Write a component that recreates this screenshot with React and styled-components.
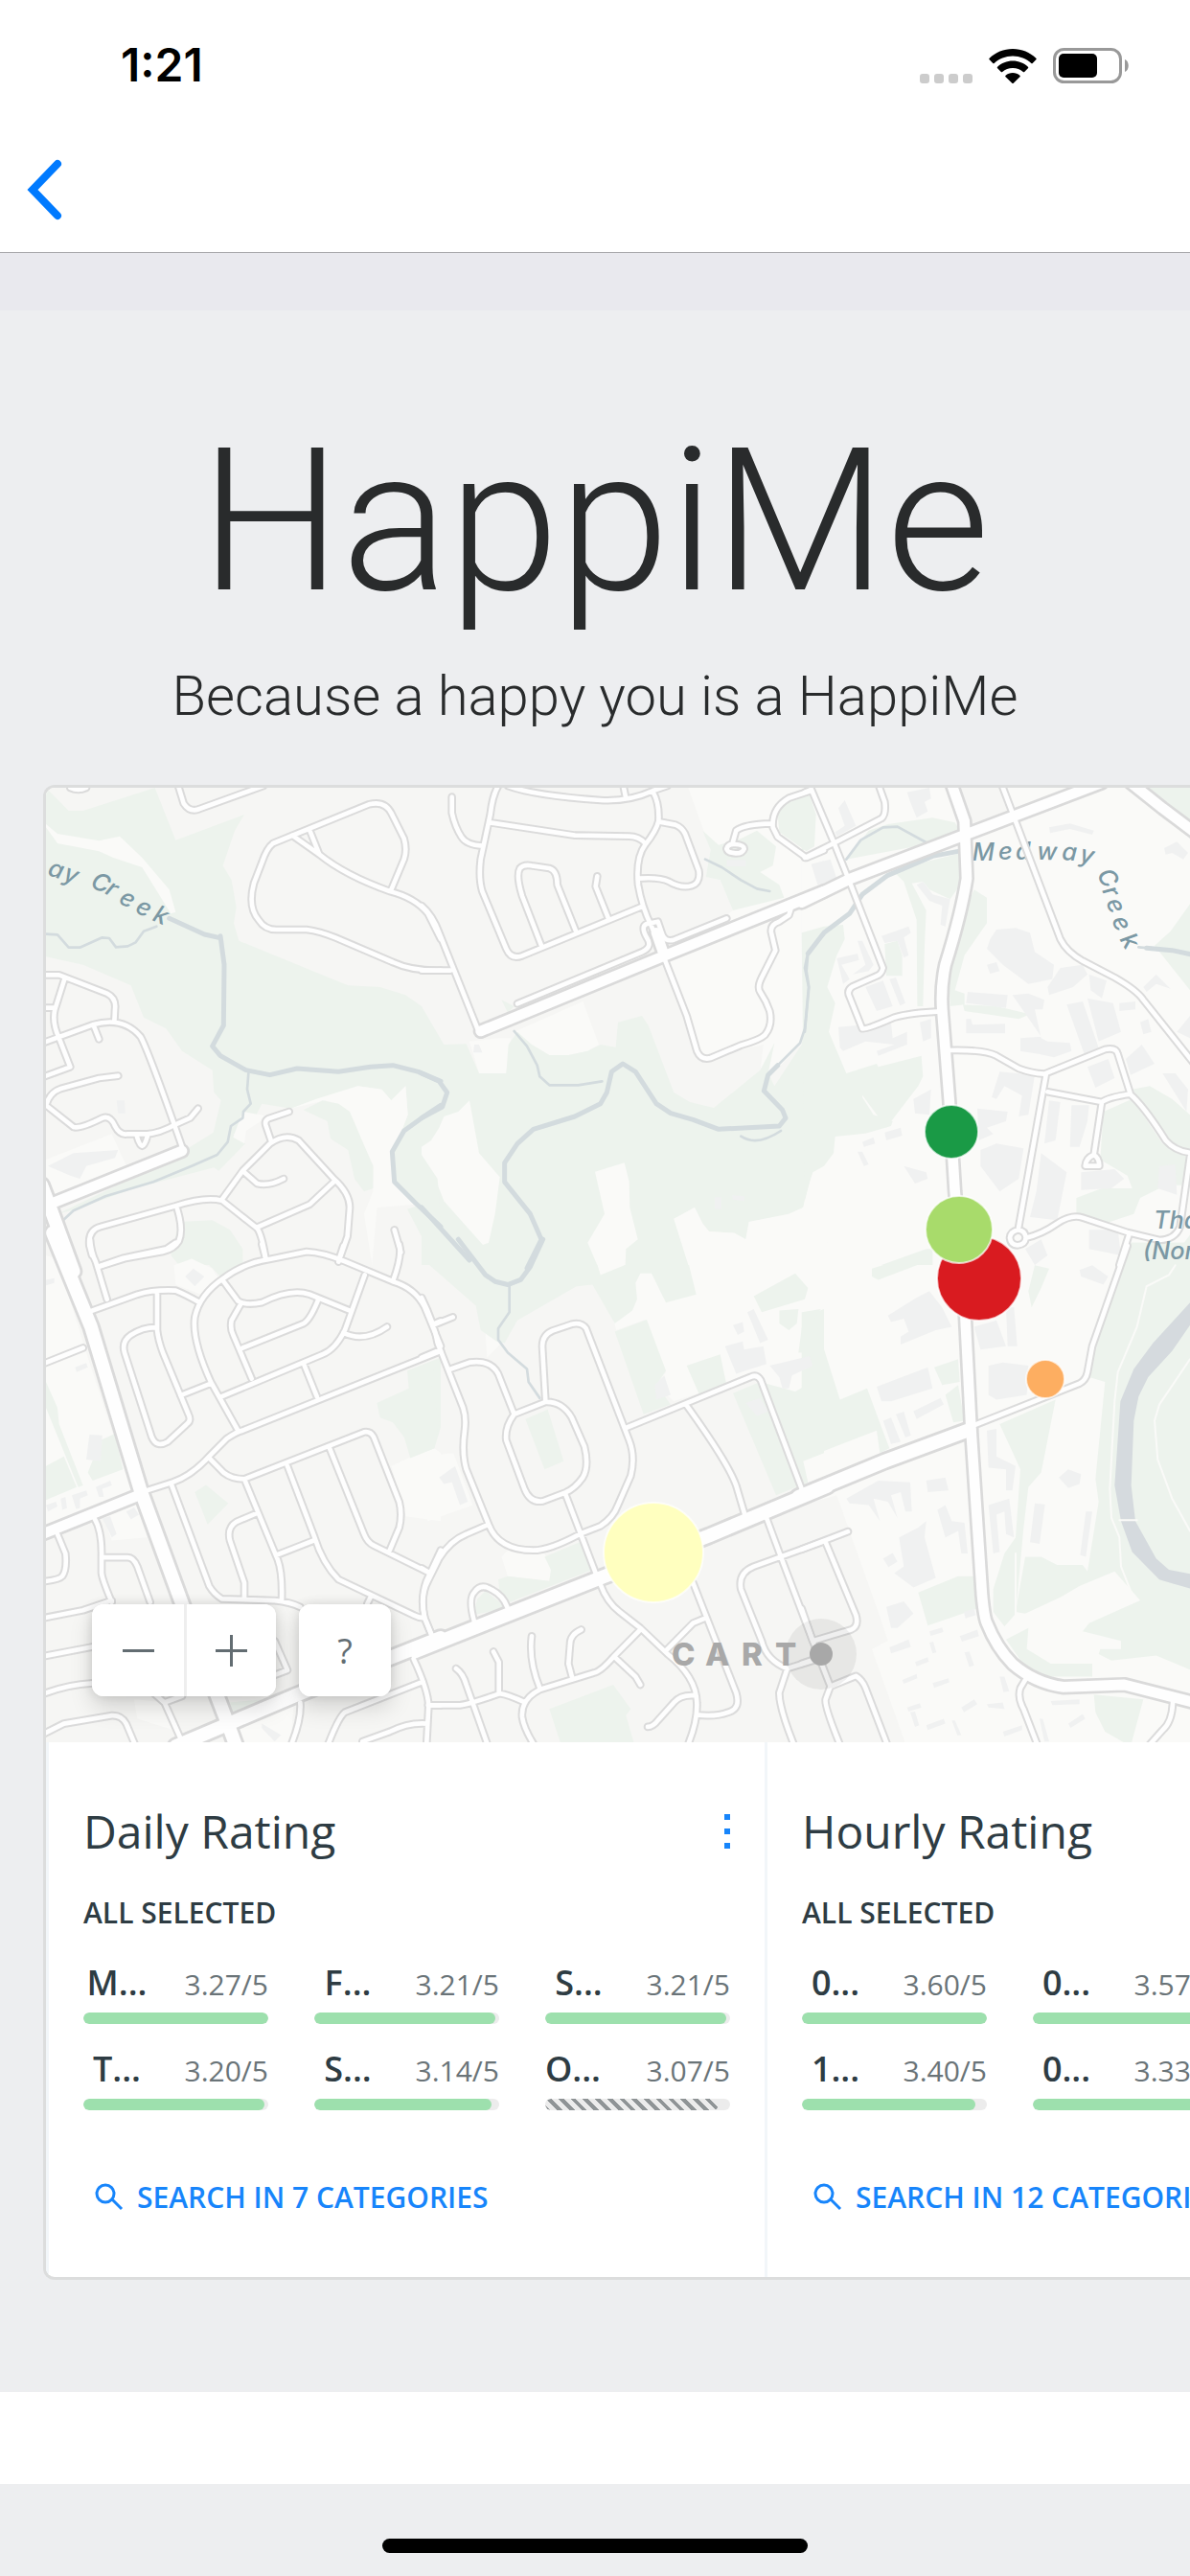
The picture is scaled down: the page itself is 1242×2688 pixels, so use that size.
import React from 'react'
import styled, { createGlobalStyle, css } from 'styled-components'

const GlobalStyle = createGlobalStyle`
    html, body
    {
        margin: 0;
        padding: 0;
        background: #edeef0;
    }

    body
    {
        overflow-x: hidden;
        font-family: 'Open Sans', sans-serif;
    }
`

const Screen = styled.div`
    display: flex;
    flex-direction: column;

    width: 100%;
    min-height: 100vh;
    overflow: hidden;
`

const StatusBar = styled.header`
    background: white;

    display: flex;
    align-items: center;
    justify-content: space-between;

    box-sizing: border-box;
    height: 132px;
    padding: 4px 63px 0 126px;
`

const Clock = styled.time`
    font-family: Inter, sans-serif;
    font-size: 48px;
    font-weight: 600;
    line-height: 56px;
    color: black;
`

const StatusIcons = styled.div`
    display: flex;
    align-items: flex-end;
    gap: 17px;

    svg
    {
        display: block;
    }
`

const NavBar = styled.nav`
    background: white;
    border-bottom: 1px solid #a7a7aa;

    display: flex;
    align-items: center;

    height: 131px;
    padding: 0 28px;
`

const BackButton = styled.button`
    background: none;
    border: 0;
    padding: 0;

    svg
    {
        display: block;
    }
`

const Strip = styled.div`
    flex: none;
    height: 60px;
    background: #e9e9ee;
`

const Hero = styled.section`
    padding: 92px 0 57px;

    text-align: center;
    font-family: Roboto, sans-serif;
    font-weight: 300;
    color: #292b2c;
`

const Title = styled.h1`
    margin: 0;
    font-size: 208px;
    font-weight: 300;
    line-height: 256px;
`

const Subtitle = styled.p`
    margin: 18px 0 0;
    font-size: 58px;
    line-height: 72px;
`

const Card = styled.main`
    margin-left: 45px;

    background: white;
    border: 3px solid #dcdddd;
    border-right: 0;
    border-radius: 12px 0 0 12px;
    overflow: hidden;
`

const MapArea = styled.section`
    position: relative;
    height: 996px;
    background: #f6f6f4;

    > svg
    {
        display: block;
        width: 100%;
        height: 100%;
    }
`

const Controls = styled.div`
    position: absolute;
    left: 48px;
    bottom: 48px;

    display: flex;
    gap: 24px;
`

const ControlGroup = styled.div`
    display: flex;
    border-radius: 12px;
    box-shadow: 0 12px 24px rgba(0, 0, 0, 0.14), 0 0 12px rgba(0, 0, 0, 0.12);
    background: white;
    overflow: hidden;
`

const ControlButton = styled.button`
    display: flex;
    align-items: center;
    justify-content: center;

    box-sizing: border-box;
    width: ${p => p.$width || 96}px;
    height: 96px;
    padding: 0;

    background: white;
    border: 0;
    border-right: ${p => p.$divided ? '3px solid #eee' : '0'};

    font-family: 'Open Sans', sans-serif;
    font-size: 36px;
    color: #636d72;
`

const Widgets = styled.div`
    display: flex;
`

const Widget = styled.section`
    flex: 0 0 750px;
    box-sizing: border-box;
    padding: 60px 36px 62px;
    border-left: 3px solid #f2f6f9;
    color: #2e3c43;
`

const WidgetHead = styled.div`
    display: flex;
    align-items: center;
    justify-content: space-between;
`

const WidgetTitle = styled.h2`
    margin: 0;
    font-size: 48px;
    font-weight: 400;
    line-height: 66px;
`

const MenuButton = styled.button`
    background: none;
    border: 0;
    padding: 0;

    svg
    {
        display: block;
    }
`

const Selected = styled.p`
    margin: 31px 0 0;
    font-size: 30px;
    font-weight: 600;
    line-height: 42px;
`

const Items = styled.ul`
    display: grid;
    grid-template-columns: repeat(3, 1fr);
    grid-template-rows: repeat(2, 60px);
    grid-auto-flow: column;
    gap: 30px 48px;

    margin: 35px 0 0;
    padding: 0;
    list-style: none;
`

const ItemRow = styled.div`
    display: flex;
    align-items: baseline;
    justify-content: space-between;
    height: 48px;
    line-height: 34px;
`

const ItemName = styled.span`
    min-width: 70px;
    font-size: 36px;
    font-weight: 600;
    text-align: ${p => p.$flush ? 'left' : 'center'};
`

const ItemValue = styled.span`
    font-size: 30px;
    color: #6a7478;
`

const Track = styled.div`
    height: 12px;
    border-radius: 6px;
    background: #ececec;
    overflow: hidden;
`

const Fill = styled.div`
    height: 100%;
    border-radius: 6px;
    background: #9de0ad;

    ${p => p.$hatched && css`
        background: repeating-linear-gradient(45deg, #8f9496 0, #8f9496 4px, #ececec 4px, #ececec 9px);
    `}
`

const SearchLink = styled.a`
    display: flex;
    align-items: center;
    gap: 14px;

    margin-top: 70px;
    padding-left: 12px;

    font-size: 30px;
    font-weight: 600;
    line-height: 42px;
    text-decoration: none;
    white-space: nowrap;
    color: #1785fb;
`

const WhiteBand = styled.div`
    flex: none;
    height: 96px;
    margin-top: 117px;
    background: white;
`

const HomeArea = styled.footer`
    display: flex;
    justify-content: center;
    padding: 57px 0 24px;
`

const HomeBar = styled.div`
    width: 444px;
    height: 15px;
    border-radius: 8px;
    background: black;
`

const upper = 'scale(0.33333)'
const lower = 'scale(0.33333 0.338)'

// The base map comes in six tiles, every one with its own drawing units
const tiles = [
    {
        at: `translate(-8 -22) ${upper}`,
        open: '',
        parks: 'M24 66 95 138 140 138 365 66 430 230 645 150 615 200 578 310 605 355 620 440 612 490 628 545 970 685 1070 690 1150 715 1200 750 1235 830 1260 865V1470L1200 1400 1105 1220 1157 1090 1150 1000 1105 1045 1075 1010 1000 1000 890 1045 790 1070 700 1055 680 1095 650 1140 610 1150 648 1180 565 1265 550 1255 300 1320 120 1385 60 1400 270 1300 460 1200 548 1145 572 1045 550 1020 545 950 450 890 400 820 330 785 290 685 140 620 24 595Z M440 1425 545 1420 600 1450 640 1510V1560H500L470 1540 440 1560 415 1530Z',
        clearings: 'M24 180 60 210 190 232 255 218 325 285 410 385 430 455 415 460 325 315 235 285 190 265 60 240 24 190Z M790 1070 870 1040 1000 1000 1075 1010 1105 1045 1150 1000 1157 1090 1130 1160 1105 1220 1115 1300 1180 1370 1060 1380 1045 1560 1020 1400 1048 1330 1050 1250 970 1080 900 1045Z M24 1230 230 1150 280 1260 24 1350Z M640 1080 720 1095 650 1140 645 1180 610 1160Z',
        groves: 'M830 1075 890 1045 940 1055 975 1080 1048 1250 1048 1320 1020 1330 990 1290 970 1200 915 1165 905 1110Z M1155 1385 1200 1370 1260 1430V1560H1225L1205 1480Z M1130 1165 1200 1215 1250 1290 1260 1420 1180 1360 1115 1290 1108 1205Z',
        buildings: 'M30 1250 110 1210 250 1200 240 1225 150 1250 130 1290 100 1280Z M245 1045 270 1045 272 1085 250 1085Z',
        wide: 'M410 475 520 525 565 535 M570 530 582 620 580 810 545 875 570 905 650 950 725 965 810 945 940 955 1040 940 1110 935 1190 955 1260 985 M1260 1060 1200 1100 1145 1140 1108 1205 1115 1300 1180 1365 1260 1440',
        narrow: 'M24 524 60 526 95 566 130 566 200 535 222 537 243 565 280 562 305 550 330 515 370 500 M658 960 654 1010 665 1055 642 1080 640 1100 603 1125 593 1175 560 1215 480 1250 360 1300 210 1345 110 1390 72 1425',
        major: 'M450 1203 L35 1370',
        highway: 'M10 1310 L35 1375 L110 1580',
        streets: 'M100 66Q125 78 150 66 M435 50L455 115Q475 145 505 132L705 60 M735 240L1035 118Q1085 105 1105 145L1145 225Q1155 260 1145 290L1105 385 M735 240Q715 255 700 300L675 365Q655 440 690 480Q710 512 750 510L840 510Q880 515 930 535L1110 612Q1170 640 1260 638 M795 215L880 275Q960 340 1100 390Q1180 410 1220 460L1260 540 M850 200L880 275 M0 652H65L215 710Q245 725 240 760L238 800 M82 665L52 760Q42 800 65 850L100 940L10 973 M0 755H50 M0 870L170 808Q265 780 320 845Q345 890 450 1190 M175 815L190 853 M250 968L190 975L70 1008Q35 1020 24 1060L110 1128Q130 1135 200 1100Q225 1090 240 1125Q255 1155 280 1150L340 1150Q380 1148 430 1120L475 1100L500 1070 M308 1155Q325 1220 342 1155 M785 1080L720 1102Q708 1108 712 1122L730 1175 M575 1355L640 1265L725 1180Q775 1145 815 1170L925 1290Q975 1335 975 1380L968 1470L940 1550 M645 1270L685 1305Q720 1315 768 1290 M925 1300L850 1370L685 1442 M160 1500Q155 1450 195 1440L430 1375Q520 1345 575 1358L685 1445Q700 1465 712 1540 M160 1500L168 1530 M435 1385Q455 1450 440 1485Q425 1510 390 1518L270 1540L190 1565 M1115 1450L1135 1520'
    },
    {
        at: `translate(392 -22) ${upper}`,
        open: 'M835 66H1260V530L1205 590 1215 700 1195 860 1100 960H1060L1070 870 880 915 765 610 975 450 935 355 890 345 905 260Z M505 735 555 870 520 890 460 903 400 903 345 870 290 830Z M150 860 240 850 280 850 265 960H180Z',
        parks: 'M0 750 70 870 140 868 180 960 265 960 272 870 300 830 345 870 400 903 460 903 520 890 560 870 608 878 615 800 690 780 710 810 790 1020 840 1050 915 1068 1060 950 1105 865 1085 960 1105 1000 1190 870 1215 700 1205 590 1260 525V1250L1225 1270 1205 1330 1195 1380 1150 1400 1105 1410 1025 1425 1015 1480 980 1460 900 1455 880 1430 855 1380 790 1415 835 1560H0Z M880 200 930 245 1000 225 1050 200 1110 250 1100 310 1060 330 1120 370 1135 410 975 450 935 355 890 345 905 260Z M1115 150 1135 110 1190 90 1235 150 1230 250 1205 265 1120 205Z M250 730 290 750 270 770Z',
        clearings: 'M150 1045 180 1210 245 1285 230 1400 210 1490 192 1497 70 1360 35 1270 0 1240V1190L30 1170 55 1130 70 1095 115 1080Z M543 1268 635 1240 650 1300 652 1380 677 1480 640 1510 638 1560H550L520 1490 573 1400Z M835 1560 790 1415 855 1380 880 1430 900 1455 980 1460 1015 1480 1025 1425 1150 1400 1195 1380 1225 1270 1260 1250V1560Z',
        groves: '',
        buildings: 'M165 870H180L190 895H162Z M955 292 1015 292 1015 312 955 312Z M1225 305 1260 295V370L1240 365Z M918 1348H938V1385H918Z M972 1342 1012 1345 1010 1360 975 1355Z',
        wide: 'M0 960 55 985 80 1020 65 1065 0 1100 M330 1570 375 1480 340 1400 260 1300 260 1240 300 1180 350 1135 480 1095 560 1055 580 1020 595 955 630 930 670 955 735 1055 780 1085 850 1105 930 1135 1120 1125 1140 1100 1130 1075 1072 1015 1085 965 1115 935 M0 1380 150 1545',
        narrow: 'M1085 965 1185 865 1200 820 1212 690 1200 630 1210 580 1260 525 M290 828 330 875 362 935 370 970 400 997 490 997 565 985 M1000 1157Q1050 1190 1125 1140 M888 290 940 315 1000 355 1050 382 1090 390',
        major: 'M185 828 L760 592 L1260 390 M735 520L760 592',
        highway: '',
        streets: 'M0 435Q35 465 55 520L175 820 M0 638H90 M240 60Q222 90 215 150L185 290Q178 350 190 390L265 570Q280 605 315 592L690 438 M95 95V145Q105 190 125 220Q140 245 190 248 M215 175L480 215L650 218Q680 218 700 240 M270 60Q350 90 560 105Q650 110 725 75L770 60 M632 60L640 100 M725 80Q745 115 742 170Q735 200 700 245Q670 285 678 370Q690 440 720 500L760 600L830 780L862 890Q875 920 905 912L1000 872Q1060 855 1075 840Q1100 810 1090 765Q1080 735 1060 705Q1050 690 1065 660L1108 575L1095 520Q1090 495 1120 485L1150 465L1158 440 M742 172L795 182Q815 190 825 210L868 325Q875 370 835 375Q805 378 775 360Q745 345 680 350 M375 560L315 405Q295 340 308 318Q320 305 345 310L400 318Q425 325 425 370L482 512 M585 475L545 375L550 343 M300 742L690 580Q725 565 705 535Q685 500 705 492L740 485L752 520Q760 550 790 542L955 475 M955 257Q960 240 983 243Q1010 245 1010 257Q1005 272 983 271Q958 270 955 257 M975 235L985 200Q1010 180 1095 178 M1220 75L1150 98Q1095 130 1100 190L1115 220L1205 285L1260 262'
    },
    {
        at: `translate(792 -22) ${upper}`,
        open: 'M-10 66H485L520 190 650 140 630 66H1220V1570H-10Z',
        parks: 'M-10 90 15 90 35 150 0 165 30 240-10 265Z M130 290 200 200 260 180 400 160 470 175 485 200 370 245Z M370 300 490 270 500 350 455 415 390 385 370 360 335 365 380 450 375 560 370 750H352L350 480 310 360 280 330Z M530 385 570 410 570 490 500 590 470 700 500 710 500 745 455 750 450 650 480 500Z M495 745 600 750 705 775 670 790 500 765Z M120 495 125 540 100 590 70 690 95 740 75 830 130 960 180 1000 180 1035 215 1090 250 1100 275 1110 270 1125 190 1148 95 1158 90 1210 60 1250 20 1280 0 1360-10 520 60 500Z M130 960 225 930 230 940 365 905 370 970 355 1000 255 1130Z M1206 430 1145 515 1095 560 1206 700Z M1025 1010 1080 1000 1150 1040 1206 1090V1210L1130 1180 1060 1080Z M935 1080 1025 1040 1120 1180 1200 1220 1195 1310 1130 1310 1050 1350 1030 1400 940 1430 850 1400 850 1350 930 1320 1025 1320 1010 1280 925 1230Z M250 555 290 545 305 590 305 655 255 655Z M1060 66H1206V170L1120 100Z M240 1560 380 1510H400V1560Z M1180 1500 1210 1460V1570H1160Z',
        clearings: '',
        groves: '',
        buildings: 'M580 540 600 510 660 505 705 520 720 580 780 620 775 665 700 680 620 620 570 570Z M570 620 600 612 610 640 580 648Z M320 80 390 66 395 100 375 110 385 140 350 160 330 110Z M105 130 125 105 160 185 100 218 95 205 125 185Z M20 305 80 290 100 350 40 370Z M765 190 830 178 905 200 900 213 830 195 768 208Z M1125 255 1165 235 1200 270 1185 290 1150 270 1130 275Z M350 370 370 360 400 400 455 415 440 500 425 495 430 435 390 420Z M240 530 325 500 332 520 310 535 325 590 310 598 290 545 250 552Z M100 600 165 585 170 605 115 620 140 665 120 680Z M165 545 180 545 215 620 200 640 150 650 190 620Z M190 690 245 670 275 750 225 765Z M265 665 285 660 315 740 298 748Z M510 705 635 715 630 755 505 740Z M650 715 700 710 750 730 745 760 720 760 740 850 760 860 830 865 835 890 780 910 735 900 675 890 675 850 740 845Z M505 790 520 790 525 808 627 805 627 835 505 835Z M820 745 870 735 920 880 875 900Z M885 725 965 740 990 830 920 860Z M890 650 945 670 930 725 895 700Z M760 690 800 630 870 620 885 650 840 690 765 715Z M985 740 1035 735 1035 760 985 765Z M1060 690 1100 650 1145 695 1100 680 1070 705Z M885 940 950 915 970 975 910 1005Z M1005 915 1055 870 1095 930 1020 965Z M1050 800 1075 790 1085 830 1060 838Z M610 955 720 965 700 1090 670 1095 680 1030 625 1000 600 1040 585 1035Z M550 1200 600 1180 685 1195 670 1290 610 1330 550 1250Z M540 1070 635 1080 630 1110 570 1130 590 1150 545 1170Z M765 1045 800 1050 785 1170 750 1180Z M835 1060 890 1060 885 1110 860 1190 830 1190Z M740 1210 820 1270 790 1420 705 1410 725 1330Z M865 1270 970 1260 1000 1290 960 1320 865 1325Z M310 1250 380 1270 385 1290 345 1305Z M165 1205 180 1205 200 1245 185 1250Z M250 1145 300 1130 305 1155 255 1170Z M180 1175 215 1160 220 1180 185 1190Z M105 815 270 800 275 850 320 830 320 870 230 905 225 890 280 870 190 860 120 890 110 880Z M360 800 395 790 395 850 370 860Z M1110 1250 1160 1245 1165 1340 1105 1320Z M1165 830 1206 780V850Z M1120 960 1160 960 1200 1010 1195 1080Z M890 1450 980 1450 990 1530 890 1510Z M690 1510 740 1480 760 1530 720 1560Z M340 1040 395 1010 390 1090 345 1085Z',
        wide: 'M480 265 400 280 330 310 260 340 180 400 140 460 60 520 10 585 M1070 568 1150 575 1220 590',
        narrow: 'M130 290 175 230 245 190 290 188 385 240 M60 520 10 585 5 640 13 690 0 830 M1045 565 1100 570',
        major: 'M-10 425 L140 352 L510 210 L930 50 M458 50 L500 170 L507 350Q490 460 440 620Q425 690 430 760L452 1040 L470 1330 L495 1600 M1020 50L1120 130L1220 205',
        highway: '',
        streets: 'M20 70L90 235L140 360L245 630Q240 650 225 655L150 688Q130 700 140 720L180 820Q190 825 280 785Q330 770 425 766 M232 60L250 110Q255 150 240 162L90 240L0 285 M0 80L20 72 M618 60L800 540Q820 580 870 608L970 660Q1040 700 1060 730L1215 925 M450 888Q560 885 600 905L670 945Q710 960 750 962L940 885Q975 878 980 900L1018 1020 M760 1018L930 1050Q950 1035 1018 1025Q1060 1060 1130 1170Q1160 1205 1215 1210 M930 1050L905 1215Q880 1225 878 1250H922Q922 1225 905 1215 M755 965Q740 1050 668 1450Q644 1455 642 1475Q645 1498 666 1498Q690 1496 692 1475Q690 1452 668 1450 M692 1475Q740 1465 790 1430Q835 1400 870 1412L1010 1458L1110 1482Q1160 1480 1175 1440L1206 1220 M1015 1465L985 1560'
    },
    {
        at: `translate(-8 478) ${lower}`,
        open: 'M24 30 60 40 150 330 290 750 340 900 230 910 200 830 24 880Z M1105 680 1160 655 1240 625 1260 640V850L1150 835Z M620 1490 800 1410 790 1535H640Z M300 1400 400 1410 440 1500 310 1460Z',
        parks: 'M415 20 430 0H635L640 50 575 100 530 55 480 35 460 60Z M24 680 80 650 120 745 24 785Z M170 725 155 700 195 600 240 580 265 690Z M24 420 60 500 65 550 140 740 125 745 24 500Z M490 760 525 738 595 795 530 860Z M1060 485 1160 440 1155 385 1260 345V560L1240 625 1165 655 1145 590 1110 545 1070 530Z M600 1410 700 1400 610 1445Z M1220 0 1260 0V90L1225 50Z',
        clearings: 'M425 60 480 40 545 70 570 110 510 150 430 120Z',
        groves: '',
        buildings: 'M160 583 200 585 195 665 150 660Z M460 95 485 70 520 95 490 125Z M200 840 225 835 245 890 230 900Z M275 820 300 808 315 830 290 845Z M115 375 150 362 155 375 120 390Z M24 800 55 790 60 805 30 820Z M70 780 85 775 90 810 75 815Z M105 770 150 755 155 770 130 780 130 810 118 812Z M180 745 225 725 230 740 200 750 205 775 190 775Z M24 105 50 100 50 115 24 122Z M700 1475 760 1510 740 1530 700 1490Z',
        wide: '',
        narrow: '',
        major: 'M0 895L320 768',
        highway: 'M45 -40 L165 250 L320 755 L450 1105 L595 1480 L625 1560 M430 1545 L590 1478 L800 1390 L1260 1210',
        streets: 'M162 -20Q165 20 180 50L215 165 M185 65L265 38L400 10L430 -10 M155 205L310 150Q360 135 430 138Q460 150 505 175 M372 145V260Q375 290 390 330L470 520Q480 540 465 550L405 605Q370 625 355 590L270 330Q260 295 290 275Q330 250 372 252 M445 462L540 425 M625 570L540 420Q480 290 490 220Q505 150 580 100Q640 55 720 42L840 18Q890 20 960 48L1110 110Q1180 130 1210 190L1260 310 M580 110L625 170Q650 185 700 175Q790 130 850 150L975 200 M635 178L605 230Q600 255 610 275L668 410 M640 315L830 240Q850 230 875 170 M1022 90L960 260Q930 320 890 335L575 465 M955 268Q1020 300 1092 250 M830 362L872 465 M340 755L420 730Q480 710 535 650L590 595Q620 575 640 570L1260 325 M535 655L580 700Q605 720 645 720L1020 575Q1040 572 1050 590L1130 790Q1140 830 1130 870L1100 940 M780 680L865 900Q890 980 940 1030L1175 1140Q1190 1148 1205 1148 M912 625L1020 890Q1030 915 1050 925L1225 1010 M1260 940L1215 1035Q1195 1090 1210 1150L1235 1210 M645 720L750 970Q765 1010 762 1095 M685 825L620 852Q590 870 600 910L645 1040V1090 M745 955L862 910 M418 740L535 1050Q550 1075 575 1090L740 1095Q790 1100 820 1115 M175 840Q200 880 198 960V1010Q200 1030 230 1100 M200 962H280Q298 962 310 990L350 1100 M60 890L85 950Q90 1000 75 1020Q65 1032 0 1038 M0 1152L140 1125L230 1095 M0 1270L170 1238 M0 1390Q80 1355 170 1350 M0 1515L80 1475L230 1450Q260 1448 275 1475L305 1545 M0 370L140 315 M360 1380L395 1410L445 1520 M395 1410L450 1390 M1175 1275Q1220 1370 1222 1420L1215 1550 M1205 1345L960 1440Q940 1455 905 1545 M1222 1418H1260 M1218 1475Q1160 1470 1100 1500L1015 1530 M820 1410Q825 1460 790 1545 M740 1220L780 1310L740 1325 M1030 1105L1040 1085 M1240 240L1260 232 M700 -5L712 40 M955 0L940 45 M1130 -5Q1140 30 1110 110'
    },
    {
        at: `translate(392 478) ${lower}`,
        open: 'M530-10H1270V700L1195 665 1050 395 790 480 735 430 765 390 700 228 610 260 560 90Z M0 650 100 640 160 800 20 850 0 810Z M250 960 290 920 385 950 405 1000 400 1035 270 1020Z M200 270 260 290 205 345Z',
        parks: 'M20-10H530L560 90 635 60 650-10H820L860 150 765 175 720 85 685 85 670 115 675 165 660 200 605 240 535 120 485 125 300 230 260 300 235 295 185 260 170 185 25 60Z M605 265 705 228 765 385 735 430 780 490 695 520Z M830 370 935 335 955 430 870 460Z M1040 155 1170 85 1210 130 1200 165 1065 205Z M975 455 1060 420 1170 450 1260 400V640L1195 665 1210 730 1110 770Z M325 535 395 505 445 665 385 690Z M385 960 495 915 535 1000 250 1110 240 1030 270 1020 400 1035 405 1000Z M160 1140 175 1090 200 1065 245 1100 260 1120Z M400 1430 600 1355 655 1430 640 1450 665 1535H435Z M0 370 60 350 25 405 55 540 40 625 0 640Z M1120 200 1180 195 1175 240 1150 260 1120 240Z M1195 220 1260 195V330L1180 330Z',
        clearings: '',
        groves: '',
        buildings: 'M950 310 1005 295 1010 320 1070 310 1080 365 985 395Z M1020 205 1040 195 1085 290 1060 300Z M1090 370 1215 340 1225 370 1160 400 1150 440 1130 440 1120 405Z M55 715 105 680 145 790 120 800 95 730 70 735Z M730 430 760 400 780 460 735 475Z M1015 485 1060 470 1085 510 1050 525Z M975 245 1005 235 1010 265 990 275Z',
        wide: 'M115-20 200 90 230 110 270 120 310 105 340 65 380-20',
        narrow: 'M275 125V205L240 255V290L270 330 330 380 335 420 370 470',
        major: '',
        highway: 'M-20 1252 L560 1025 L900 895 L1270 742',
        streets: 'M0 160Q40 240 50 300L130 500Q140 530 135 570Q125 640 140 690L210 860Q240 940 350 940Q400 940 495 890L560 865Q600 840 615 800L655 710Q670 650 650 600L515 255Q500 235 470 242L410 262Q378 275 378 310L388 480 M35 245L98 220 M0 345L55 322 M92 380L150 360Q215 350 240 395L290 520L388 482Q440 480 470 530L510 620Q525 680 505 715Q480 750 450 762L380 788Q340 795 322 750L265 600Q260 560 290 520 M450 765L545 1010 M640 562L1030 405Q1050 395 1062 415L1190 750 M828 490Q960 670 985 740L1012 830 M210 860L140 890Q90 910 55 965L20 1035Q-5 1080 10 1150L35 1210 M0 995L25 1010 M165 1160Q145 1090 165 1070Q185 1040 220 1062Q255 1080 268 1115 M560 1045Q580 1100 620 1130L685 1180L770 1260Q860 1330 862 1410Q865 1470 830 1550 M685 1185L600 1270Q560 1315 540 1318L370 1370Q310 1400 315 1455Q320 1490 355 1545 M605 1270L670 1330L685 1355 M765 1250L850 1165L882 1152 M850 1040L985 1380Q1000 1430 960 1440Q920 1455 862 1448 M855 1388Q810 1385 790 1410L740 1465Q725 1485 708 1485 M345 1205Q335 1280 370 1365 M500 1185Q465 1200 465 1230L460 1290L472 1335 M225 1253L242 1285V1380 M108 1305Q130 1320 140 1355L210 1550 M20 1418H120Q150 1415 245 1382Q270 1385 325 1410 M1080 840L1125 960L1225 1220 M1260 912L1040 990Q990 1010 1000 1060L1065 1220Q1080 1280 1145 1305L1260 1270 M1145 1305L1120 1380Q1120 1430 1170 1550'
    },
    {
        at: `translate(792 478) ${lower}`,
        open: 'M-10-10H1220V1550H320L210 1245 260 1220 230 1130 100 770-10 800Z',
        parks: 'M210 70 380 18 390 45 230 105 210 95Z M-10 205 50 195 30 225 110 475 195 440 240 560 265 625 235 640 225 570-10 660Z M405 375 480 350 485 420 430 430Z M480 430 500 540 465 545 440 460Z M720 60 765 70 740 130 710 190 700 140Z M610 550 785 475 740 700 700 745 685 870 660 1140 625 1175 590 1130 590 1060 625 950 660 900 675 690Z M1210-10V1310L1100 1265 960 1280 920 1260 925 1245 990 1245 990 1220 870 1190 890 1165 1050 1095 970 1005 860 1050 800 1085 690 1135 660 1130 690 960 740 960 790 985 870 985 885 1005 920 790 910 720 940 420 890 405 905 310 1010-10Z M630 1215 700 1180 695 1245 770 1290 900 1290 900 1330 760 1330 690 1300Z M355 1070 480 1020 530 1020 540 1120 385 1172Z M905 1385 1060 1400 1020 1545 940 1500 910 1440Z',
        clearings: '',
        groves: '',
        buildings: 'M260 215 350 160 390 140 430 190 460 250 410 260 300 305 300 280 325 265 310 225 270 235Z M530 250 600 230 630 310 550 320Z M630 190 655 190 665 310 635 310Z M575 370 620 360 700 370 695 460 600 475 575 460Z M225 435 385 375 400 440 270 480 240 480Z M340 510 425 470 435 490 350 535Z M245 540 270 530 300 605 270 612Z M285 520 310 512 332 585 315 592Z M795 715 825 690 865 705 860 735 825 748Z M720 795 752 798 735 920 705 915Z M880 820 900 820 880 960 862 955Z M295 900 355 870 380 850 375 900 410 1025 340 1055 280 1010 310 990Z M245 965 275 948 290 975 262 992Z M255 1115 310 1098 340 1135 290 1180 270 1180Z M130 780 230 725 330 730 335 820 315 820 300 760 270 770 290 840 260 790 215 780 235 850 200 800 140 795Z M380 725 440 715 450 755 385 760Z M415 815 440 800 460 850 500 855 510 950 490 950 480 880 440 900Z M570 570 600 565 600 650 660 680 650 755 630 755 630 690 575 685Z M575 800 640 780 655 900 630 890 625 820 600 830 610 945 590 950Z M860 75 900 60 950 95 935 120 865 95Z M265 1240 325 1215 332 1238 270 1258Z M485 1205 540 1185 545 1205 492 1222Z M498 1130 530 1120 535 1140 503 1150Z M500 1255 515 1252 530 1295 515 1300Z M320 1425 360 1412 365 1425 325 1438Z M490 1425 530 1400 540 1415 498 1440Z M570 1415 620 1410 625 1430 575 1425Z M770 1405 860 1400 860 1415 775 1418Z M825 1475 870 1445 878 1460 832 1488Z M380 1480 435 1460 440 1475 385 1495Z M330 1440 345 1438 358 1480 345 1485Z M620 1500 680 1480 680 1495 625 1515Z M460 1465 470 1465 490 1510 478 1512Z M610 1330 625 1330 640 1375 622 1378Z M735 1460 745 1460 765 1530 750 1530Z M400 1350 450 1335 452 1348 405 1365Z M305 1340 350 1322 352 1335 310 1352Z M390 1190 430 1178 434 1192 394 1204Z M390 1225 402 1222 412 1255 400 1258Z M345 1285 385 1270 388 1284 350 1298Z',
        wide: '',
        narrow: '',
        river: 'M1206 175 1090 300 1030 380 988 480 970 740 990 850 1025 945 1110 1030 1150 1042 1220 1062V1015L1140 1000 1100 965 1035 850 1022 740 1030 540 1045 465 1075 405 1150 325 1220 225Z',
        paths: 'M985 847H1040 M1160 60 1140 90 1070 125 1040 250 980 390 970 480 955 750 960 840 985 900 990 990 1030 1090 M1206 350 1110 490 1095 540 1105 660 1150 780 1206 880 M660 950 660 1140 625 1180 590 1140',
        major: 'M490 -20 L520 560 L555 1080Q562 1150 570 1165Q600 1240 650 1290Q720 1350 810 1362L1000 1355L1220 1410',
        highway: 'M-20 775 L250 665 L515 568',
        streets: 'M1010 0L900 310L885 390Q880 415 860 425L535 552 M690 1340L675 1365Q665 1395 685 1430L730 1545 M1152 1410Q1150 1470 1120 1495L1075 1545 M-10 937L135 882 M65 915L160 1140Q170 1175 145 1185L25 1220 M-10 1290L50 1270 M-10 1120L25 1220L80 1360L65 1400Q60 1420 112 1545 M80 1360L160 1328Q180 1340 190 1365L260 1545'
    }
]

const markers = [
    { x: 945, y: 359, r: 28, color: '#1a9a46' },
    { x: 974, y: 512, r: 44, color: '#d91b20' },
    { x: 953, y: 461, r: 35, color: '#a8db6b' },
    { x: 1043, y: 617, r: 20, color: '#fdae61' },
    { x: 634, y: 798, r: 52, color: '#ffffbf' }
]

const daily = [
    { name: 'M...', value: '3.27/5', fill: 100 },
    { name: 'T...', value: '3.20/5', fill: 98 },
    { name: 'F...', value: '3.21/5', fill: 98 },
    { name: 'S...', value: '3.14/5', fill: 96 },
    { name: 'S...', value: '3.21/5', fill: 98 },
    { name: 'O...', value: '3.07/5', fill: 94, other: true }
]

const hourly = [
    { name: '0...', value: '3.60/5', fill: 100 },
    { name: '1...', value: '3.40/5', fill: 94 },
    { name: '0...', value: '3.57/5', fill: 99 },
    { name: '0...', value: '3.33/5', fill: 93 }
]

function Layer ({ part, ...rest })
{
    return (
        <g {...rest}>
            {tiles.map(tile => tile[part]
                ? <path key={tile.at} transform={tile.at} d={tile[part]} />
                : null
            )}
        </g>
    )
}

function BaseMap ()
{
    const line = { fill: 'none', strokeLinecap: 'round', strokeLinejoin: 'round' }
    const label = {
        fill: '#7b98a4',
        fontFamily: 'Inter, sans-serif',
        fontStyle: 'italic',
        fontWeight: 500,
        fontSize: 76
    }

    return (
        <svg viewBox="0 0 1194 996" preserveAspectRatio="xMinYMin slice" role="img" aria-label="Map of ratings">
            <rect width="1194" height="996" fill="#f6f6f4" />
            <Layer part="open" fill="#fafaf8" />
            <Layer part="parks" fill="#edf3ed" />
            <Layer part="clearings" fill="#fafaf8" />
            <Layer part="groves" fill="#edf3ed" />
            <Layer part="buildings" fill="#f0f1f1" />
            <Layer part="river" fill="#d5dade" />
            <Layer part="wide" {...line} stroke="#d3dbde" strokeWidth="15" />
            <Layer part="narrow" {...line} stroke="#d3dbde" strokeWidth="8" />
            <Layer part="paths" {...line} stroke="#fafaf8" strokeWidth="6" />

            <g transform={tiles[2].at} {...label}>
                <text x="524 606 660 726 803 857 912 930 943 960 985" y="295 291 290 290 291 297 338 388 422 480 540" rotate="0 0 0 2 5 12 58 65 70 66 60">MedwayCreek</text>
            </g>

            <Layer part="streets" {...line} stroke="#dbdbdb" strokeWidth="26" />
            <Layer part="major" {...line} stroke="#dadada" strokeWidth="48" />
            <Layer part="highway" {...line} stroke="#dadada" strokeWidth="58" />
            <Layer part="streets" {...line} stroke="#fefefe" strokeWidth="14" />
            <Layer part="major" {...line} stroke="#fefefe" strokeWidth="32" />
            <Layer part="highway" {...line} stroke="#fefefe" strokeWidth="41" />

            <g transform={tiles[0].at} {...label}>
                <text x="26 74 160 206 248 300 355" y="338 354 376 396 424 453 480" rotate="18 20 24 30 30 28 24">ayCreek</text>
            </g>
            <g transform={tiles[2].at} {...label}>
                <text x="1092" y="1445">Tha</text>
                <text x="1058" y="1542">(Nor</text>
            </g>

            {markers.map(m => (
                <circle key={m.color} cx={m.x} cy={m.y} r={m.r} fill={m.color} stroke="#fff" strokeOpacity="0.7" strokeWidth="2" />
            ))}

            <circle cx="809" cy="904" r="37" fill="#000" fillOpacity="0.06" />
            <circle cx="809" cy="904" r="12" fill="#a8a8a8" />
            <text x="653 688 726 761" y="916" fill="#a8a8a8" fontFamily="Inter, sans-serif" fontSize="33" fontWeight="800">CART</text>
        </svg>
    )
}

function SearchIcon ()
{
    return (
        <svg width="30" height="30" viewBox="0 0 30 30" fill="none" stroke="#1785fb" strokeWidth="3" aria-hidden="true">
            <circle cx="11" cy="11" r="9" />
            <path d="M18 17 L28 27" />
        </svg>
    )
}

function RatingWidget ({ title, items, count })
{
    return (
        <Widget>
            <WidgetHead>
                <WidgetTitle>{title}</WidgetTitle>
                <MenuButton aria-label={`${title} options`}>
                    <svg width="6" height="36" fill="#1785fb" aria-hidden="true">
                        <path d="M0 0h6v6H0zM0 15h6v6H0zM0 30h6v6H0z" />
                    </svg>
                </MenuButton>
            </WidgetHead>
            <Selected>ALL SELECTED</Selected>
            <Items>
                {items.map(item => (
                    <li key={item.name + item.value}>
                        <ItemRow>
                            <ItemName $flush={item.other}>{item.name}</ItemName>
                            <ItemValue>{item.value}</ItemValue>
                        </ItemRow>
                        <Track>
                            <Fill $hatched={item.other} style={{ width: `${item.fill}%` }} />
                        </Track>
                    </li>
                ))}
            </Items>
            <SearchLink href="#search">
                <SearchIcon />
                SEARCH IN {count} CATEGORIES
            </SearchLink>
        </Widget>
    )
}

function App ()
{
    return (
        <Screen>
            <GlobalStyle />
            <StatusBar>
                <Clock>1:21</Clock>
                <StatusIcons>
                    <svg width="55" height="10" fill="#ccc" aria-hidden="true">
                        <rect width="10" height="10" rx="3" />
                        <rect x="15" width="10" height="10" rx="3" />
                        <rect x="30" width="10" height="10" rx="3" />
                        <rect x="45" width="10" height="10" rx="3" />
                    </svg>
                    <svg width="50" height="36" viewBox="0 0 50 36" aria-hidden="true">
                        <path d="M25 0C34.500 0 43 3.700 49.300 9.700a1 1 0 0 1 0 1.500L45.700 15a1 1 0 0 1-1.400 0C39.200 10.300 32.500 7.500 25 7.500S10.800 10.300 5.700 15a1 1 0 0 1-1.400 0L.7 11.200a1 1 0 0 1 0-1.500C7 3.700 15.500 0 25 0Z" />
                        <path d="M25 12.500c6.200 0 11.700 2.300 15.900 6.200a1 1 0 0 1 0 1.500l-3.700 3.700a1 1 0 0 1-1.400 0C32.900 21.400 29.200 20 25 20s-7.900 1.400-10.800 3.900a1 1 0 0 1-1.400 0l-3.700-3.700a1 1 0 0 1 0-1.500C13.300 14.800 18.800 12.500 25 12.500Z" />
                        <path d="M25 25c2.900 0 5.400 1 7.400 2.700a1 1 0 0 1 0 1.500l-6.600 6.500a1 1 0 0 1-1.500 0l-6.700-6.500a1 1 0 0 1 0-1.500C19.600 26 22.100 25 25 25Z" />
                    </svg>
                    <svg width="80" height="37" viewBox="0 0 80 37" aria-hidden="true">
                        <rect x="1.500" y="1.500" width="69" height="34" rx="10" fill="none" stroke="#999" strokeWidth="3" />
                        <rect x="6" y="6" width="40" height="25" rx="5" />
                        <path d="M75 12c5 2 5 11 0 13Z" fill="#999" />
                    </svg>
                </StatusIcons>
            </StatusBar>
            <NavBar>
                <BackButton aria-label="Back">
                    <svg width="38" height="64" viewBox="0 0 38 64" fill="none" stroke="#007aff" strokeWidth="8" strokeLinecap="round" aria-hidden="true">
                        <path d="M32 5 L6 32 L32 59" />
                    </svg>
                </BackButton>
            </NavBar>
            <Strip />
            <Hero>
                <Title>HappiMe</Title>
                <Subtitle>Because a happy you is a HappiMe</Subtitle>
            </Hero>
            <Card>
                <MapArea>
                    <BaseMap />
                    <Controls>
                        <ControlGroup>
                            <ControlButton $divided $width={99} aria-label="Zoom out">
                                <svg width="33" height="33" stroke="#636d72" strokeWidth="3" aria-hidden="true">
                                    <path d="M0 16.500H33" />
                                </svg>
                            </ControlButton>
                            <ControlButton $width={93} aria-label="Zoom in">
                                <svg width="33" height="33" stroke="#636d72" strokeWidth="3" aria-hidden="true">
                                    <path d="M0 16.500H33M16.500 0V33" />
                                </svg>
                            </ControlButton>
                        </ControlGroup>
                        <ControlGroup>
                            <ControlButton>?</ControlButton>
                        </ControlGroup>
                    </Controls>
                </MapArea>
                <Widgets>
                    <RatingWidget title="Daily Rating" items={daily} count={7} />
                    <RatingWidget title="Hourly Rating" items={hourly} count={12} />
                </Widgets>
            </Card>
            <WhiteBand />
            <HomeArea>
                <HomeBar />
            </HomeArea>
        </Screen>
    )
}

export default App
